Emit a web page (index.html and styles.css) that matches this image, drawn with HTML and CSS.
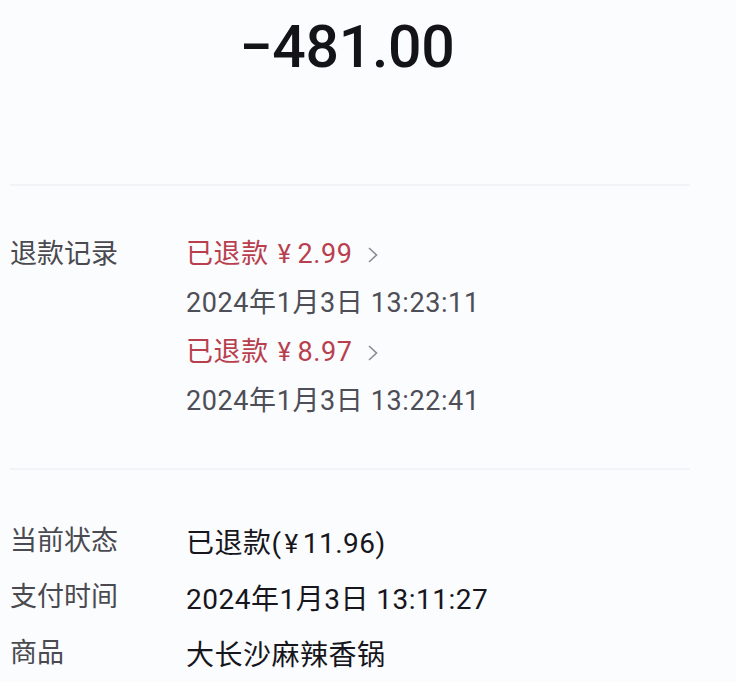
FILE: index.html
```html
<!DOCTYPE html>
<html lang="zh-CN">
<head>
<meta charset="utf-8">
<title>订单详情</title>
<link rel="stylesheet" href="styles.css">
</head>
<body>
<div class="page">
  <div class="amount">−481.00</div>
  <div class="divider"></div>
  <div class="refunds">
    <div class="label">退款记录</div>
    <div class="list">
      <div class="line red">已退款<span class="yen">¥</span>2.99<svg class="chev" width="14" height="18" viewBox="0 0 14 18"><polyline points="3,2 10.5,9 3,16" fill="none" stroke="#8a8a90" stroke-width="1.6"/></svg></div>
      <div class="line grey">2024年1月3日 13:23:11</div>
      <div class="line red">已退款<span class="yen">¥</span>8.97<svg class="chev" width="14" height="18" viewBox="0 0 14 18"><polyline points="3,2 10.5,9 3,16" fill="none" stroke="#8a8a90" stroke-width="1.6"/></svg></div>
      <div class="line grey">2024年1月3日 13:22:41</div>
    </div>
  </div>
  <div class="divider"></div>
  <div class="info">
    <div class="row"><div class="label">当前状态</div><div class="value">已退款(<span class="yen2">¥</span>11.96)</div></div>
    <div class="row"><div class="label">支付时间</div><div class="value">2024年1月3日 13:11:27</div></div>
    <div class="row"><div class="label">商品</div><div class="value">大长沙麻辣香锅</div></div>
  </div>
</div>
</body>
</html>
```
FILE: styles.css
```css
html, body {
  margin: 0;
  padding: 0;
  background: #fbfcfe;
}
body {
  font-family: Roboto, "Noto Sans CJK SC", sans-serif;
  color: #1a1a20;
}
.page {
  width: 680px;
  padding-left: 10px;
}
.amount {
  height: 184px;
  box-sizing: border-box;
  padding-top: 17px;
  padding-right: 6px;
  text-align: center;
  font-size: 59px;
  line-height: 60px;
  font-weight: 500;
  color: #141418;
  letter-spacing: -0.3px;
}
.divider {
  height: 2px;
  background: #f1f3f7;
}
.refunds {
  display: flex;
  padding: 44px 0 42px;
}
.label {
  width: 176px;
  font-size: 27px;
  line-height: 49px;
  color: #4a4a50;
}
.list {
  display: flex;
  flex-direction: column;
}
.line {
  font-size: 27px;
  line-height: 49px;
  display: flex;
  align-items: center;
  letter-spacing: 0.6px;
}
.red {
  color: #b8404e;
}
.grey {
  color: #4e4e56;
}
.yen {
  margin: 0 6px 0 9px;
  font-size: 25px;
}
.chev {
  margin-left: 13px;
}
.info {
  padding-top: 43px;
}
.row {
  display: flex;
  height: 56px;
  align-items: center;
}
.value {
  font-size: 28px;
  color: #16161c;
  letter-spacing: 0.5px;
}
.yen2 {
  margin: 0 4px 0 3px;
  font-size: 26px;
}
```
